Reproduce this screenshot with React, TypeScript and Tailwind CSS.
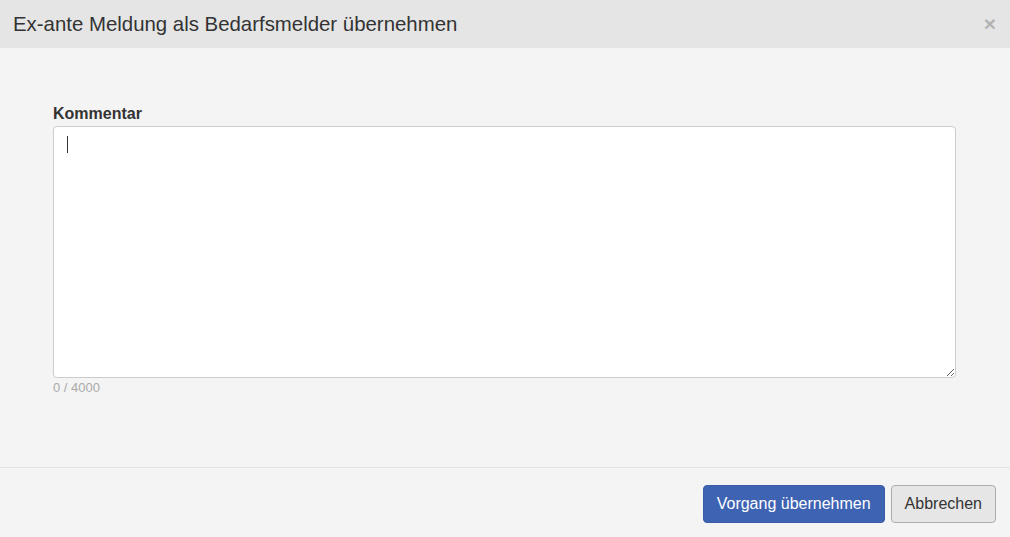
export default function App() {
  return (
    <div className="w-[1010px] h-[537px] flex flex-col bg-[#f4f4f4] font-['Liberation_Sans',Arial,sans-serif] text-[#333]">
      {/* Header */}
      <div className="h-[48px] shrink-0 flex items-center justify-between bg-[#e5e5e5] pl-[13px] pr-[14px]">
        <h4 className="text-[20.4px] leading-none text-[#333]">Ex-ante Meldung als Bedarfsmelder übernehmen</h4>
        <button className="text-[21px] font-bold leading-none text-[#b3b3b3] -mt-[2px]">×</button>
      </div>

      {/* Body */}
      <div className="flex-1 pl-[53px] pr-[54px] pt-[56px]">
        <label className="block text-[16px] leading-[20px] font-bold text-[#333] mb-[2px]">Kommentar</label>
        <div className="relative">
          <textarea
            className="block w-full h-[252px] bg-white border border-[#cccccc] rounded-[4px] px-[12px] py-[8px] text-[14px] outline-none"
          />
          <span className="absolute left-[14px] top-[10px] w-px h-[17px] bg-[#333]" />
        </div>
        <div className="text-[13px] leading-[18px] text-[#aaaaaa] mt-px">0 / 4000</div>
      </div>

      {/* Footer */}
      <div className="h-[70px] shrink-0 border-t border-[#e3e3e3] flex justify-end items-start pt-[17px] pr-[14px] gap-[6px]">
        <button className="h-[38px] px-[13px] rounded-[4px] bg-[#3e63b3] border border-[#3a5ca8] text-white text-[16px]">
          Vorgang übernehmen
        </button>
        <button className="h-[38px] px-[13px] rounded-[4px] bg-[#e6e6e6] border border-[#adadad] text-[#333] text-[16px]">
          Abbrechen
        </button>
      </div>
    </div>
  );
}
